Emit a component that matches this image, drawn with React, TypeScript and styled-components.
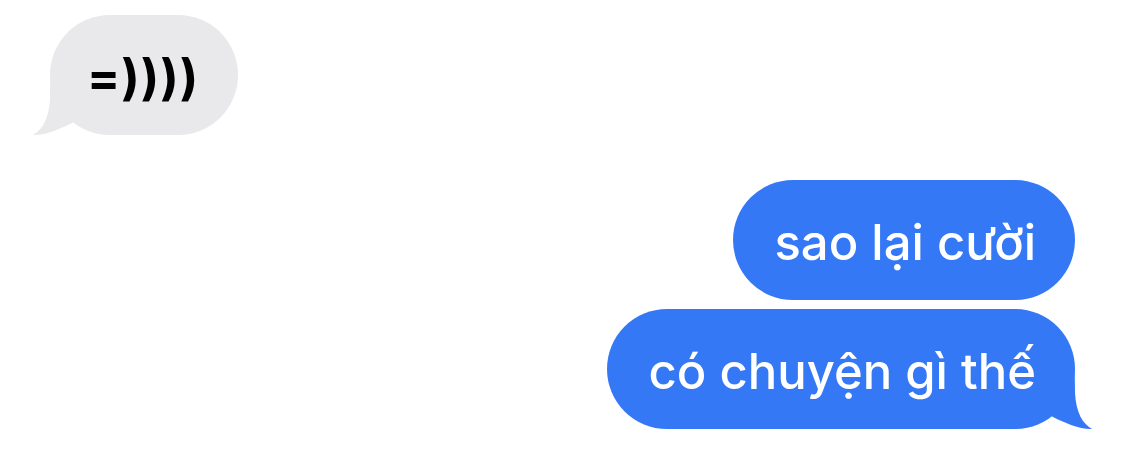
import React from "react";
import styled, { createGlobalStyle } from "styled-components";

const GlobalStyle = createGlobalStyle`
  html, body {
    margin: 0;
    padding: 0;
    background: #ffffff;
  }
  body {
    font-family: "Inter", "Noto Sans", "Liberation Sans", sans-serif;
  }
`;

type Side = "left" | "right";

const Tail: React.FC<{ side: Side; color: string }> = ({ side, color }) => (
  <TailSvg $side={side} viewBox="0 0 50 72" width={50} height={72}>
    <path
      d="M0 0 L28 0 C30 10 30 24 30 32 C31 52 38 63 47 68 C35 68.5 20 62 8 56 L0 50 Z"
      fill={color}
    />
  </TailSvg>
);

const App: React.FC = () => {
  return (
    <>
      <GlobalStyle />
      <Thread>
        <Bubble $side="left">
          <BubbleText $side="left">=))))</BubbleText>
          <Tail side="left" color="#e9e9eb" />
        </Bubble>
        <OutgoingGroup>
          <Bubble $side="right">
            <BubbleText $side="right">sao lại cười</BubbleText>
          </Bubble>
          <Bubble $side="right">
            <BubbleText $side="right">có chuyện gì thế</BubbleText>
            <Tail side="right" color="#3478f6" />
          </Bubble>
        </OutgoingGroup>
      </Thread>
    </>
  );
};

export default App;

const Thread = styled.div`
  width: 1125px;
  height: 449px;
  box-sizing: border-box;
  padding: 15px 50px 0 50px;
  display: flex;
  flex-direction: column;
  overflow: hidden;
`;

const OutgoingGroup = styled.div`
  margin-top: 45px;
  display: flex;
  flex-direction: column;
  align-items: flex-end;
  gap: 9px;
`;

const Bubble = styled.div<{ $side: Side }>`
  position: relative;
  align-self: ${(p) => (p.$side === "left" ? "flex-start" : "flex-end")};
  background: ${(p) => (p.$side === "left" ? "#e9e9eb" : "#3478f6")};
  border-radius: 60px;
  padding: ${(p) => (p.$side === "left" ? "35px 39px 29px 37px" : "35px 39px 29px 41px")};
`;

const BubbleText = styled.span<{ $side: Side }>`
  position: relative;
  z-index: 1;
  display: block;
  font-size: 49px;
  line-height: 56px;
  white-space: nowrap;
  font-weight: ${(p) => (p.$side === "left" ? 700 : 500)};
  letter-spacing: ${(p) => (p.$side === "left" ? "1px" : "0")};
  color: ${(p) => (p.$side === "left" ? "#000000" : "#ffffff")};
`;

const TailSvg = styled.svg<{ $side: Side }>`
  position: absolute;
  bottom: -4px;
  ${(p) => (p.$side === "left" ? "left: -20px;" : "right: -20px;")}
  transform: ${(p) => (p.$side === "left" ? "scaleX(-1)" : "none")};
`;
